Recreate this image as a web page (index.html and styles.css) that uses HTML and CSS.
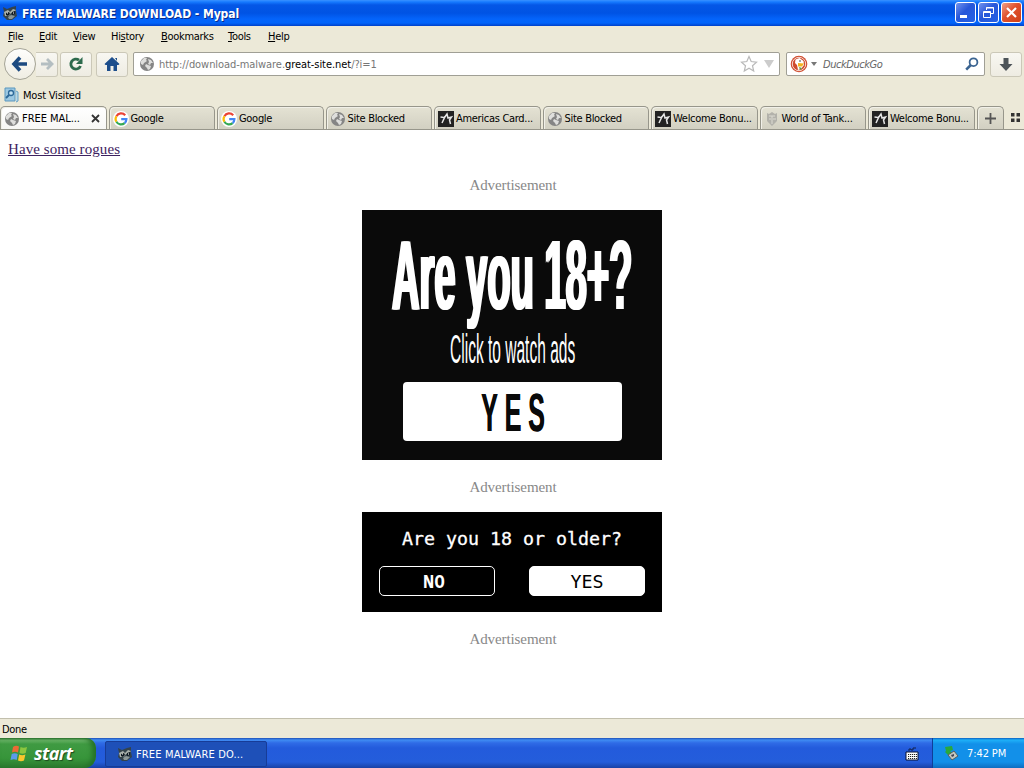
FILE: index.html
```html
<!DOCTYPE html>
<html lang="en">

<head>
  <meta charset="UTF-8">
  <title>FREE MALWARE DOWNLOAD - Mypal</title>
  <link rel="stylesheet" href="styles.css">
</head>

<body>
  <!-- shared icons -->
  <svg class="defs" width="0" height="0">
    <symbol id="globe" viewBox="0 0 16 16">
      <circle cx="8" cy="8" r="7" fill="#858585"/>
      <path d="M2 5l3-3 3 0-1 2 1 1-3 2-1 2-2-1zM9 3l3 1 2 3-2 0-1 2-2-1 1-2zM7 8l2 1 3 1-1 3-2 1-1-2-2-2z" fill="#dededc"/>
    </symbol>
    <symbol id="google" viewBox="0 0 16 16">
      <circle cx="8" cy="8" r="8" fill="#fff"/>
      <g fill="none" stroke-width="2.2">
        <path d="M12.200 4.200A5.400 5.400 0 0 0 3.400 5.200" stroke="#ea4335"/>
        <path d="M3.400 5.200a5.400 5.400 0 0 0 0 5.600" stroke="#fbbc05"/>
        <path d="M3.400 10.800a5.400 5.400 0 0 0 8.200 1.300" stroke="#34a853"/>
        <path d="M8.200 8.200h5.200a5.400 5.400 0 0 1-1.800 3.900" stroke="#4285f4"/>
      </g>
    </symbol>
    <symbol id="star-dark" viewBox="0 0 16 16">
      <rect width="16" height="16" fill="#222"/>
      <path d="M2.500 6l4 .5L4 12M6.500 6.500L9 3l1 4 3.500-1-2 3 1 4" fill="none" stroke="#e6e6e6" stroke-width="1.500"/>
    </symbol>
    <symbol id="tank" viewBox="0 0 16 16">
      <path d="M3 2l2 1 3-2 3 2 2-1v8l-5 5-5-5z" fill="#b3b2ab"/>
      <path d="M5 5h6M8 5v8M5 8h2M9 8h3" stroke="#dddcd3" fill="none"/>
    </symbol>
    <symbol id="raccoon" viewBox="0 0 16 16">
      <path d="M1 2l4 2 5-2 4-1v5l1 5-5 4H5l-4-4 1-4z" fill="#34434b"/>
      <path d="M2 7l4-2 2 2 3-3 3 1-2 2-3 1-2 3-4 0z" fill="#a9b0aa"/>
      <path d="M4 8l3-1 1 2-2 2-2-1zM10 7l3-1v3l-3 1z" fill="#111b22"/>
      <path d="M6 12l3-2 4 1-3 3H7z" fill="#8c9797"/>
      <path d="M5 8h1M11 8h1" stroke="#fff"/>
    </symbol>
  </svg>

  <header class="titlebar">
    <svg class="app-icon" width="16" height="16"><use href="#raccoon"/></svg>
    <span class="title">FREE MALWARE DOWNLOAD - Mypal</span>
    <div class="win-buttons">
      <span class="win-btn"><svg width="19" height="19"><path d="M4 13.500h7" stroke="#fff" stroke-width="3"/></svg></span>
      <span class="win-btn"><svg width="19" height="19" fill="none" stroke="#fff"><path d="M7.500 7V4.500h7v6H12M7 5h8" /><path d="M4.500 8.500h7v6h-7zM4 9.500h8"/></svg></span>
      <span class="win-btn close"><svg width="19" height="19"><path d="M5 5l9 9M14 5l-9 9" stroke="#fff" stroke-width="2.2"/></svg></span>
    </div>
  </header>

  <nav class="menubar">
    <span class="m-file"><u>F</u>ile</span>
    <span class="m-edit"><u>E</u>dit</span>
    <span class="m-view"><u>V</u>iew</span>
    <span class="m-history">Hi<u>s</u>tory</span>
    <span class="m-bookmarks"><u>B</u>ookmarks</span>
    <span class="m-tools"><u>T</u>ools</span>
    <span><u>H</u>elp</span>
  </nav>

  <div class="navbar">
    <div class="back"><svg width="20" height="18"><path d="M10 2.500L4 9l6 6.500M4 9h13" fill="none" stroke="#1c4a80" stroke-width="3.600"/></svg></div>
    <div class="tool-btn forward"><svg width="14" height="14"><path d="M7 2l5 5-5 5M1 7h10" fill="none" stroke="#b4bec1" stroke-width="2.800"/></svg></div>
    <div class="tool-btn reload"><svg width="16" height="16"><path d="M12.500 10A5 5 0 1 1 11 4.200" fill="none" stroke="#2d6a4c" stroke-width="2.800"/><path d="M14.500 1v7H8z" fill="#2d6a4c"/></svg></div>
    <div class="tool-btn home"><svg width="16" height="16"><path d="M8 1l7.500 7-1 1H13v6H9.500v-5h-3v5H3V9H1.500l-1-1zM11 2h2v3z" fill="#1d4e8c"/></svg></div>
    <div class="field urlbar">
      <svg width="16" height="16"><use href="#globe"/></svg>
      <span class="url">http://download-malware.<b>great-site.net</b>/?i=1</span>
      <svg class="star" width="18" height="18"><path d="M9 1.500l2.200 5 5.300.6-4 3.600 1.200 5.300L9 13.300 4.300 16l1.200-5.300-4-3.600 5.300-.6z" fill="#fff" stroke="#b9b9b9" stroke-width="1.200"/></svg>
      <svg class="drop" width="10" height="8"><path d="M0 0h10L5 8z" fill="#ccc"/></svg>
    </div>
    <div class="field searchbar">
      <svg width="18" height="18"><circle cx="9" cy="9" r="8.300" fill="#cf4b2d"/><circle cx="9" cy="9" r="6.700" fill="#cf4b2d" stroke="#fff" stroke-width=".8"/><path d="M5.500 4.500l4-1.500 4 3 .5 4-3 4-3 1-1-5-2-2z" fill="#fff"/><path d="M8 8l6 .5-2 3H8z" fill="#f5b321"/><path d="M9 12l3 1-2 2z" fill="#5a9c49"/><circle cx="10" cy="6" r=".8" fill="#333"/></svg>
      <svg class="arrow" width="6" height="4"><path d="M0 0h6L3 4z" fill="#777"/></svg>
      <span class="placeholder">DuckDuckGo</span>
      <svg class="lens" width="14" height="14"><circle cx="8.500" cy="5.200" r="3.900" fill="none" stroke="#3b6491" stroke-width="1.800"/><path d="M5.800 8L1.200 12.600" stroke="#3b6491" stroke-width="2.600"/></svg>
    </div>
    <div class="tool-btn download"><svg width="14" height="15"><path d="M4.500 1h5v6h4L7 14 .5 7h4z" fill="#4c5358"/></svg></div>
  </div>

  <div class="bookmarks">
    <svg width="15" height="16"><path d="M1 1h10v13H1z" fill="#9cc8e2" stroke="#5b97be"/><path d="M12 4l2 1v9l-2 1" fill="#b8d9e8" stroke="#66a0c4"/><circle cx="7" cy="6" r="2.500" fill="#c3e1f2" stroke="#2c6898" stroke-width="1.300"/><path d="M5 8l-3 3" stroke="#2c6898" stroke-width="1.800"/></svg>
    <span>Most Visited</span>
  </div>

  <div class="tabs">
    <div class="tab active"><svg width="16" height="16"><use href="#globe"/></svg><span>FREE MAL...</span><svg class="tab-close" width="9" height="9"><path d="M1 1l7 7M8 1L1 8" stroke="#333" stroke-width="1.800"/></svg></div>
    <div class="tab"><svg width="16" height="16"><use href="#google"/></svg><span>Google</span></div>
    <div class="tab"><svg width="16" height="16"><use href="#google"/></svg><span>Google</span></div>
    <div class="tab"><svg width="16" height="16"><use href="#globe"/></svg><span>Site Blocked</span></div>
    <div class="tab"><svg width="16" height="16"><use href="#star-dark"/></svg><span>Americas Card...</span></div>
    <div class="tab"><svg width="16" height="16"><use href="#globe"/></svg><span>Site Blocked</span></div>
    <div class="tab"><svg width="16" height="16"><use href="#star-dark"/></svg><span>Welcome Bonu...</span></div>
    <div class="tab"><svg width="16" height="16"><use href="#tank"/></svg><span>World of Tank...</span></div>
    <div class="tab"><svg width="16" height="16"><use href="#star-dark"/></svg><span>Welcome Bonu...</span></div>
    <div class="tab new-tab"><svg width="11" height="11"><path d="M5.500 0v11M0 5.500h11" stroke="#555" stroke-width="1.800"/></svg></div>
    <svg class="groups" width="9" height="9"><path d="M0 0h3.500v3.500H0zM5.500 0H9v3.500H5.500zM0 5.500h3.500V9H0zM5.500 5.500H9V9H5.500z" fill="#333"/></svg>
  </div>

  <main class="content">
    <a class="rogues" href="#">Have some rogues</a>
    <p class="label">Advertisement</p>
    <div class="ad ad-big">
      <div class="big-title">Are you 18+?</div>
      <div class="big-sub">Click to watch ads</div>
      <div class="big-button"><div class="big-yes">YES</div></div>
    </div>
    <p class="label">Advertisement</p>
    <div class="ad ad-small">
      <div class="question">Are you 18 or older?</div>
      <div class="answers">
        <span class="answer no">NO</span>
        <span class="answer yes">YES</span>
      </div>
    </div>
    <p class="label">Advertisement</p>
  </main>

  <div class="statusbar">Done</div>

  <footer class="taskbar">
    <div class="start">
      <svg width="20" height="19"><path d="M3 3q3-2 6-.5L8 8.500Q5 7 2 8.500z" fill="#ec6a35"/><path d="M10.500 3q3 1.500 6.500 0l-1.300 6Q12.500 10.500 9.500 9z" fill="#8cc63f"/><path d="M1.700 10q3-1.500 6 0l-1 6Q4 14.500.5 16z" fill="#5b9bea"/><path d="M9.200 10.500q3 1.500 6.200 0L14 16.500q-3 1.500-6 0z" fill="#fbc62d"/></svg>
      <span>start</span>
    </div>
    <div class="task"><svg width="16" height="16"><use href="#raccoon"/></svg><span>FREE MALWARE DO...</span></div>
    <svg class="keyboard" width="14" height="14"><path d="M4 4V2h2v1h2V1h3" stroke="#10204c" fill="none"/><path d="M1 5h12v8H1z" fill="#fff" stroke="#0a1233"/><path d="M3 7.500h9M3 9.500h9M3 11.500h9" stroke="#222" stroke-dasharray="1.200 .8"/></svg>
    <div class="tray">
      <svg width="16" height="16"><path d="M2 2l7-1 1 4-3 1 2 2-3 3-4-4 1-1z" fill="#29a83b"/><path d="M5 10l6-4 4 5-6 4z" fill="#c5c8bf" stroke="#53605e"/><path d="M8 10l3-1v2l-2 1z" fill="#445"/></svg>
      <span>7:42 PM</span>
    </div>
  </footer>
</body>

</html>
```
FILE: styles.css
```css
body {
  margin: 0;
  width: 1024px;
  height: 768px;
  overflow: hidden;
  display: flex;
  flex-direction: column;
  background: #ece9d8;
  font-family: "DejaVu Sans Condensed", "DejaVu Sans", sans-serif;
  font-stretch: condensed;
  font-size: 11px;
  letter-spacing: -0.3px;
  line-height: 14px;
  color: #000;
  white-space: nowrap;
}

svg {
  display: block;
  flex: none;
}

.defs {
  position: absolute;
}

/* Title bar */
.titlebar {
  height: 26px;
  flex: none;
  box-sizing: border-box;
  display: flex;
  align-items: center;
  padding: 0 2px 1px;
  background: linear-gradient(#3a92ff 0, #167aff 2px, #0557e6 5px, #0053e4 13px, #0464fb 19px, #0164fa 23px, #0040c9 26px);
}

.title {
  margin-left: 4px;
  padding-top: 2px;
  color: #fff;
  font-weight: bold;
  font-size: 12px;
  letter-spacing: -0.05px;
  text-shadow: 1px 1px 0 #0a2c8a;
}

.win-buttons {
  margin-left: auto;
  display: flex;
  gap: 2px;
}

.win-btn {
  width: 19px;
  height: 19px;
  border: 1px solid #fff;
  border-radius: 3px;
  background: linear-gradient(135deg, #7293ee, #2757d9 45%, #2461e6);
}

.win-btn.close {
  background: linear-gradient(135deg, #f0a088, #e0512d 45%, #cf4018);
}

/* Menu */
.menubar {
  height: 20px;
  flex: none;
  box-sizing: border-box;
  display: flex;
  align-items: center;
  padding: 1px 0 0 8px;
}

.m-file { width: 31px; }
.m-edit { width: 34px; }
.m-view { width: 38px; }
.m-history { width: 50px; }
.m-bookmarks { width: 67px; }
.m-tools { width: 40px; }

/* Navigation */
.navbar {
  height: 37px;
  flex: none;
  box-sizing: border-box;
  display: flex;
  align-items: center;
  padding: 0 2px 1px 4px;
}

.back {
  width: 30px;
  height: 30px;
  border: 1px solid #a5a497;
  border-radius: 50%;
  background: linear-gradient(#fefefc, #efede3);
  display: flex;
  align-items: center;
  justify-content: center;
}

.tool-btn {
  box-sizing: border-box;
  width: 32px;
  height: 25px;
  border: 1px solid #cbc8b8;
  border-radius: 3px;
  background: linear-gradient(#f8f7f2, #eeece2);
  display: flex;
  align-items: center;
  justify-content: center;
}

.forward {
  width: 22px;
  border-left: none;
  border-radius: 0 3px 3px 0;
}

.reload { margin-left: 2px; }
.home { margin: 0 5px 0 4px; }

.field {
  box-sizing: border-box;
  height: 24px;
  border: 1px solid #a09f95;
  border-radius: 2px;
  background: #fff;
  display: flex;
  align-items: center;
}

.urlbar {
  width: 647px;
  padding: 0 5px;
}

.url {
  margin-left: 4px;
  padding-top: 2px;
  color: #777;
  letter-spacing: -0.06px;
}

.url b {
  color: #000;
  font-weight: normal;
}

.star { margin-left: auto; }
.drop { margin-left: 6px; }

.searchbar {
  width: 199px;
  margin: 0 5px 0 6px;
  padding: 0 5px 0 3px;
}

.arrow { margin-left: 3px; }

.placeholder {
  margin-left: 6px;
  padding-top: 2px;
  font-style: italic;
  letter-spacing: -0.45px;
  color: #666;
}

.lens { margin-left: auto; }

/* Bookmarks */
.bookmarks {
  height: 23px;
  flex: none;
  display: flex;
  align-items: center;
  gap: 4px;
  padding-left: 4px;
  letter-spacing: -0.2px;
}

.bookmarks span {
  padding-top: 2px;
}

/* Tabs */
.tabs {
  height: 24px;
  flex: none;
  box-sizing: border-box;
  display: flex;
  gap: 2px;
  border-bottom: 1px solid #97968b;
}

.tab {
  box-sizing: border-box;
  width: 106.500px;
  display: flex;
  align-items: center;
  gap: 4px;
  padding: 1px 4px 0 3px;
  border: 1px solid #97968b;
  border-bottom: none;
  border-radius: 5px 5px 0 0;
  background: linear-gradient(#e4e2d3, #d2d0c2);
  box-shadow: inset 1px 1px 0 #f1f0e8;
}

.tab span {
  margin-left: -2px;
  padding-top: 1px;
}

.tab.active {
  background: linear-gradient(#fff, #f7f7f4);
  letter-spacing: -0.05px;
}

.tab-close {
  margin-left: auto;
  margin-right: 2px;
}

.new-tab {
  width: 27px;
  padding: 1px 0 0;
  justify-content: center;
}

.groups {
  margin: 7px 0 0 5px;
}

/* Page */
.content {
  box-sizing: border-box;
  height: 588px;
  flex: none;
  padding: 10px 8px 0;
  background: #fff;
  font-family: "Liberation Serif", serif;
  font-size: 15px;
  line-height: 18px;
  letter-spacing: 0;
}

.rogues {
  display: block;
  width: max-content;
  letter-spacing: 0.08px;
  color: #3d2260;
}

.label {
  box-sizing: border-box;
  margin: 16px 0;
  height: 20px;
  padding: 1px 0 0 2px;
  line-height: 20px;
  text-align: center;
  letter-spacing: -0.1px;
  color: #888;
}

.ad {
  width: 300px;
  margin: 0 auto;
  color: #fff;
}

.ad-big {
  box-sizing: border-box;
  height: 250px;
  padding-top: 16px;
  background: #0a0a0a;
  font-family: "Liberation Sans", sans-serif;
}

/* tall condensed lettering */
.big-title {
  width: max-content;
  margin-left: 30px;
  font-size: 99px;
  line-height: 98px;
  font-weight: bold;
  text-shadow: 3px 0 #fff, -3px 0 #fff;
  transform: scaleX(0.385);
  transform-origin: left;
}

.big-sub {
  width: max-content;
  margin: 5px 0 0 88px;
  font-size: 41px;
  line-height: 40px;
  transform: scaleX(0.379);
  transform-origin: left;
}

.big-button {
  box-sizing: border-box;
  width: 219px;
  height: 59px;
  margin: 13px 0 0 41px;
  padding: 4px 0 0 78px;
  border-radius: 4px;
  background: #fff;
}

.big-yes {
  width: max-content;
  color: #0a0a0a;
  font-size: 54px;
  line-height: 53px;
  font-weight: bold;
  letter-spacing: 15px;
  text-shadow: 1px 0 #0a0a0a;
  transform: scaleX(0.46);
  transform-origin: left;
}

.ad-small {
  box-sizing: border-box;
  height: 100px;
  padding: 15px 17px 0;
  background: #000;
  font-family: "DejaVu Sans Mono", monospace;
}

.question {
  height: 24px;
  line-height: 24px;
  font-size: 18.300px;
  text-align: center;
  -webkit-text-stroke: 0.3px #fff;
}

.answers {
  margin-top: 15px;
  display: flex;
  justify-content: space-between;
}

.answer {
  box-sizing: border-box;
  width: 116px;
  height: 30px;
  border: 1px solid #fff;
  border-radius: 5px;
  line-height: 29px;
  text-align: center;
  font-size: 18.300px;
}

.no {
  padding-right: 6px;
  font-family: "Open Sans", sans-serif;
  font-stretch: condensed;
  font-size: 18px;
  font-weight: 700;
  letter-spacing: 0;
}

.yes {
  background: #fff;
  color: #000;
}

/* Status */
.statusbar {
  box-sizing: border-box;
  height: 20px;
  flex: none;
  border-top: 1px solid #c2bfad;
  padding: 4px 2px 0;
}

/* Taskbar */
.taskbar {
  height: 30px;
  flex: none;
  display: flex;
  color: #fff;
  background: linear-gradient(#1f4fb5 0, #3f8cf3 2px, #2f6be6 5px, #235bdc 10px, #245ddb 24px, #1941a5 30px);
}

.start {
  width: 96px;
  box-sizing: border-box;
  display: flex;
  align-items: center;
  padding-left: 10px;
  gap: 4px;
  border-radius: 0 10px 12px 0;
  background: linear-gradient(#2f6f31 0, #6eb86c 2px, #3f9a42 6px, #37953a 20px, #2c7a2f 30px);
  box-shadow: inset -4px 0 5px #257228;
}

.start span {
  font-family: "Open Sans", sans-serif;
  font-size: 18px;
  font-weight: bold;
  font-style: italic;
  font-stretch: normal;
  letter-spacing: -0.6px;
  text-shadow: 1px 1px 1px #1c4a1e;
}

.task {
  box-sizing: border-box;
  width: 162px;
  height: 26px;
  margin: 3px 0 0 9px;
  padding-left: 11px;
  display: flex;
  align-items: center;
  gap: 3px;
  border: 1px solid #173c97;
  border-radius: 2px;
  background: #1e50b8;
  letter-spacing: 0.15px;
}

.task span,
.tray span {
  padding-top: 1px;
}

.keyboard {
  margin: 9px 13px 0 auto;
}

.tray {
  width: 92px;
  box-sizing: border-box;
  display: flex;
  align-items: center;
  padding-left: 10px;
  gap: 8px;
  border-left: 1px solid #0f3f99;
  letter-spacing: -0.1px;
  background: linear-gradient(#0c5fc0 0, #1eb0f8 2px, #1290e9 6px, #1290e9 24px, #0f6dc0 30px);
}
```
